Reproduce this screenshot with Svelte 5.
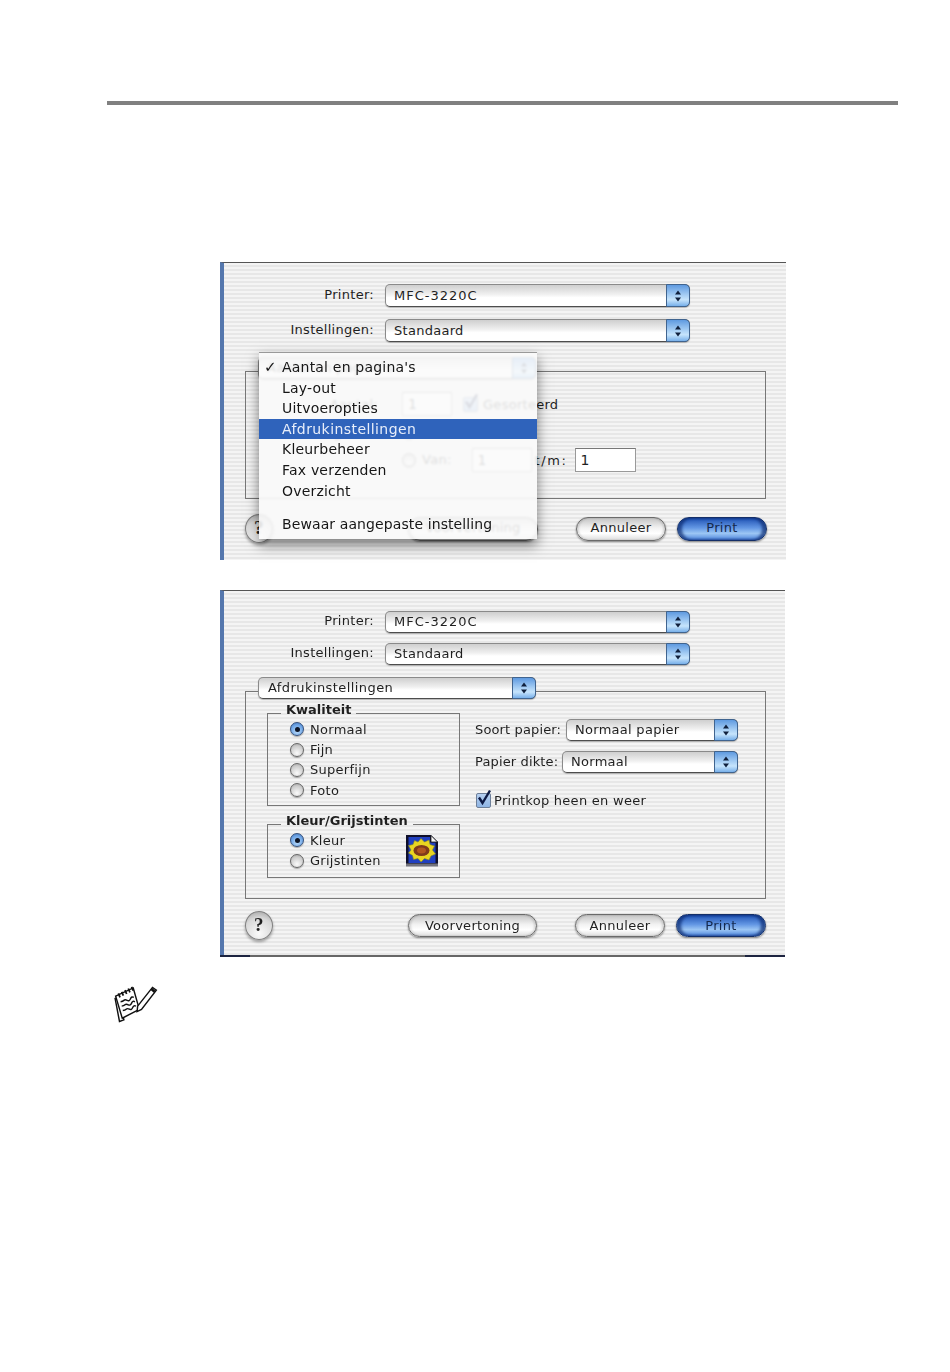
<script>
  const quality = ['Normaal', 'Fijn', 'Superfijn', 'Foto']
  const colour = ['Kleur', 'Grijstinten']
  const menu = [
    "Aantal en pagina's",
    'Lay-out',
    'Uitvoeropties',
    'Afdrukinstellingen',
    'Kleurbeheer',
    'Fax verzenden',
    'Overzicht',
  ]
</script>

{#snippet arrows()}
  <span class="stepper">
    <svg width="8" height="12" viewBox="0 0 8 12">
      <path d="M4 0.5 7 4.5H1ZM4 11.5 1 7.5H7Z" fill="#10203c" />
    </svg>
  </span>
{/snippet}

{#snippet popup(text, cls)}
  <div class="popup {cls}">
    <span class="popup-text">{text}</span>
    {@render arrows()}
  </div>
{/snippet}

{#snippet radio(label, on)}
  <div class="choice">
    <span class="radio" class:on></span>
    <span>{label}</span>
  </div>
{/snippet}

{#snippet tick()}
  <svg width="18" height="18" viewBox="0 0 18 18">
    <path d="M4 8.5 7.5 14 15 1.5" fill="none" stroke="#0d1a44" stroke-width="2.4" />
  </svg>
{/snippet}

{#snippet footer()}
  <div class="footer">
    <span class="help">?</span>
    <span class="pill preview">Voorvertoning</span>
    <span class="pill cancel">Annuleer</span>
    <span class="pill print">Print</span>
  </div>
{/snippet}

{#snippet header()}
  <div class="row">
    <span class="row-label">Printer:</span>
    {@render popup('MFC-3220C', 'wide model')}
  </div>
  <div class="row">
    <span class="row-label">Instellingen:</span>
    {@render popup('Standaard', 'wide')}
  </div>
{/snippet}

<main class="page">
  <div class="rule"></div>

  <section class="dialog first">
    {@render header()}

    <div class="box copies">
      {@render popup('Aantal en pagina\'s', 'pane')}
      <div class="copy-row">
        <span class="copy-label">Aantal:</span>
        <span class="field small">1</span>
        <span class="check on">{@render tick()}</span>
        <span class="sorted">Gesorteerd</span>
      </div>
      <div class="page-row">
        <span class="copy-label">Pagina's:</span>
        {@render radio('Alle', true)}
      </div>
      <div class="range-row">
        {@render radio('Van:', false)}
        <span class="field small range-from">1</span>
        <span class="until">t/m:</span>
        <span class="field">1</span>
      </div>
    </div>

    {@render footer()}

    <div class="menu">
      {#each menu as item, i}
        <div class="menu-item" class:active={item === 'Afdrukinstellingen'}>
          {#if i === 0}<span class="tick">✓</span>{/if}
          {item}
        </div>
      {/each}
      <div class="menu-item save">Bewaar aangepaste instelling</div>
    </div>
  </section>

  <section class="dialog second">
    {@render header()}

    <div class="box settings">
      {@render popup('Afdrukinstellingen', 'pane')}
      <div class="left">
        <fieldset class="group quality">
          <legend>Kwaliteit</legend>
          {#each quality as q, i}
            {@render radio(q, i === 0)}
          {/each}
        </fieldset>
        <fieldset class="group colour">
          <legend>Kleur/Grijstinten</legend>
          {#each colour as c, i}
            {@render radio(c, i === 0)}
          {/each}
          <svg class="flower" width="34" height="33" viewBox="0 0 34 33">
            <path d="M1 1H26L33 8V32H1Z" fill="#10102a" />
            <path d="M3.5 3H25V8.5H30.5V29H3.5Z" fill="#2140c0" />
            <path d="M26 1.5 32.5 8H26Z" fill="#f6f6f6" stroke="#222" stroke-width=".8" />
            <path d="M16 4.5 19.5 8 24 6 25 10.5 29.5 12 27.5 16 30.5 20 26 22 24 26 19.5 24.5 16 28 13 24.5 8.5 25.5 7.5 21.5 3.5 19 6 16 3.5 11.5 8 10.5 9.5 6.5 13 8Z" fill="#e9d521" stroke="#7d8426" stroke-width=".6" />
            <ellipse cx="16.5" cy="16.5" rx="8" ry="5.6" fill="#7f3a1b" />
            <ellipse cx="16.5" cy="16.5" rx="4.5" ry="3" fill="#b1561f" />
            <path d="M1 29.5H33V32.5H1Z" fill="#72727c" />
          </svg>
        </fieldset>
      </div>
      <div class="right">
        <div class="paper-row">
          <span class="paper-label">Soort papier:</span>
          {@render popup('Normaal papier', 'paper')}
        </div>
        <div class="paper-row">
          <span class="paper-label">Papier dikte:</span>
          {@render popup('Normaal', 'thick')}
        </div>
        <div class="bidi">
          <span class="check on">{@render tick()}</span>
          <span>Printkop heen en weer</span>
        </div>
      </div>
    </div>

    {@render footer()}
  </section>

  <svg class="note" width="44" height="44" viewBox="16 11 40 40">
    <g fill="#fff" stroke="#111" stroke-width="1.3">
      <path d="M17 25 21 46 25 44.5 20 24Z" />
      <path d="M17.5 23 33.5 15.5 39 35 23.5 43Z" />
      <path d="M37.5 32 51 15 54.5 17.5 41 35 37 37Z" />
    </g>
    <path d="M20 20.5 21.5 24M23 19 24.5 22.5M26 17.5 27.5 21M29 16 30.5 19.5M32 14.5 33.5 18" stroke="#111" stroke-width="1.6" />
    <path d="M22 28q2-.2 3-1.2t3 0 3-1.5 3-1.2M23 32q2-.2 3-1.2t3 0 3-1.5 3-1.2M24 36q2-.2 3-1.2t3 0 3-1.5 3-1.2" fill="none" stroke="#111" stroke-width="1.3" />
    <path d="M50 16.5 53 19" stroke="#111" stroke-width="2.4" />
  </svg>
</main>

<style>
  :global(body) {
    background: #fff;
  }

  .page {
    width: 950px;
    height: 1372px;
    padding-top: 101px;
    box-sizing: border-box;
    font-family: 'DejaVu Sans', sans-serif;
    font-size: 13px;
    letter-spacing: 0.28px;
    color: #1f1f1f;
    overflow: hidden;
  }

  .rule {
    width: 791px;
    height: 4px;
    margin-left: 107px;
    background: #808080;
  }

  .dialog {
    position: relative;
    box-sizing: border-box;
    margin-left: 220px;
    padding-top: 21px;
    border-left: 4px solid #5577ad;
    border-top: 1px solid #555;
    background: repeating-linear-gradient(#f4f4f4 0 2px, #e7e7e7 2px 4px);
    filter: blur(0.35px);
  }

  .first {
    width: 566px;
    height: 298px;
    margin-top: 157px;
  }

  .second {
    width: 565px;
    height: 367px;
    margin-top: 30px;
    padding-top: 20px;
    border-bottom: 2px solid #666;
  }

  .second::after {
    content: '';
    position: absolute;
    left: -4px;
    right: 0;
    bottom: -2px;
    height: 2px;
    background: linear-gradient(90deg, #1d2440 30px, transparent 30px, transparent 525px, #1d2440 525px);
  }

  .row {
    display: flex;
    align-items: center;
    gap: 11px;
    margin-bottom: 12px;
  }

  .second .row {
    margin-bottom: 10px;
  }

  .second .row .popup {
    height: 22px;
    line-height: 19px;
  }

  .first .row .popup {
    line-height: 22px;
  }

  .row-label {
    width: 150px;
    padding-bottom: 2px;
    text-align: right;
  }

  .second .row-label {
    padding-bottom: 4px;
  }

  .popup {
    display: flex;
    box-sizing: border-box;
    height: 23px;
    border: 1px solid #8a8a8a;
    border-bottom-color: #4d4d4d;
    border-radius: 5px;
    background: linear-gradient(#cfcfcf, #f0f0f0 45%, #fff 60%, #fff);
    box-shadow: 0 1px 1px rgba(0, 0, 0, 0.25);
    line-height: 21px;
  }

  .popup-text {
    flex: 1;
    padding-left: 8px;
  }

  .model .popup-text {
    letter-spacing: 1px;
  }

  .stepper {
    display: flex;
    align-items: center;
    justify-content: center;
    width: 22px;
    margin: -1px;
    border: 1px solid #40648f;
    border-radius: 0 5px 5px 0;
    background: linear-gradient(#5f9ae0, #a9d0f5 50%, #c6e4fc 70%, #78b0ea);
  }

  .wide {
    width: 305px;
  }

  .pane {
    position: absolute;
    left: 12px;
    top: -15px;
    width: 278px;
    height: 22px;
    line-height: 19px;
  }

  .settings .pane .popup-text {
    padding-left: 9px;
    letter-spacing: 0.42px;
  }

  .box {
    position: relative;
    box-sizing: border-box;
    width: 521px;
    margin-left: 21px;
    border: 1px solid #777;
  }

  .copies {
    height: 128px;
    margin-top: 29px;
    padding-top: 20px;
  }

  .copy-row,
  .page-row,
  .range-row {
    display: flex;
    align-items: center;
  }

  .copy-row {
    height: 24px;
  }

  .copy-label {
    width: 132px;
    text-align: right;
    margin-right: 24px;
  }

  .field {
    box-sizing: border-box;
    width: 61px;
    height: 24px;
    padding-left: 5px;
    border: 1px solid #999;
    border-top-color: #777;
    background: #fff;
    font-size: 14px;
    line-height: 22px;
  }

  .small {
    width: 50px;
  }

  .sorted {
    margin-left: 5px;
  }

  .page-row {
    height: 32px;
  }

  .range-row {
    height: 24px;
    padding-left: 156px;
  }

  .range-from {
    width: 60px;
    margin-left: 20px;
  }

  .until {
    margin: 0 7px 0 3px;
    letter-spacing: 1.6px;
  }

  .check {
    position: relative;
    box-sizing: border-box;
    width: 15px;
    height: 15px;
    margin-left: 11px;
    border: 1px solid #6d7f99;
    border-radius: 2px;
    background: linear-gradient(#b5cff0, #8fb5e4);
  }

  .check svg {
    position: absolute;
    left: -2px;
    top: -5px;
  }

  .choice {
    display: flex;
    align-items: center;
    gap: 6px;
    height: 20.4px;
    white-space: nowrap;
  }

  .radio {
    box-sizing: border-box;
    position: relative;
    width: 14px;
    height: 14px;
    flex: none;
    border: 1px solid #666;
    border-radius: 50%;
    background: radial-gradient(circle at 50% 75%, #fafafa, #cfcfcf 60%, #a0a0a0);
    box-shadow: 0 1px 1px rgba(0, 0, 0, 0.3);
  }

  .radio.on {
    border-color: #34507c;
    background: radial-gradient(circle at 50% 70%, #b9dafa, #6fa6e6 60%, #3f72bb);
  }

  .radio.on::after {
    content: '';
    position: absolute;
    left: 3.5px;
    top: 3.5px;
    width: 5px;
    height: 5px;
    border-radius: 50%;
    background: #0c1426;
  }

  .footer {
    display: flex;
    align-items: center;
    box-sizing: border-box;
    width: 543px;
    height: 29px;
    margin-top: 15px;
    padding-left: 21px;
  }

  .second .footer {
    margin-top: 12px;
  }

  .help {
    box-sizing: border-box;
    width: 28px;
    height: 29px;
    border: 1px solid #808080;
    border-radius: 50%;
    background: radial-gradient(circle at 50% 80%, #fafafa, #d8d8d8 62%, #9a9a9a);
    box-shadow: 0 2px 3px rgba(0, 0, 0, 0.35);
    font: bold 19px/26px 'Liberation Serif', serif;
    text-align: center;
  }

  .pill {
    box-sizing: border-box;
    width: 90px;
    height: 24px;
    margin-left: 11px;
    border: 1px solid #6a6a6a;
    border-radius: 12px;
    background: linear-gradient(#c4c4c4, #f2f2f2 45%, #fff 70%, #dedede);
    box-shadow: 0 1px 2px rgba(0, 0, 0, 0.45), inset 2px 0 2px rgba(0, 0, 0, 0.12), inset -2px 0 2px rgba(0, 0, 0, 0.12);
    text-align: center;
    line-height: 20px;
  }

  .second .pill {
    height: 23px;
    line-height: 21px;
  }

  .preview {
    width: 130px;
    margin-left: 135px;
  }

  .second .preview {
    width: 129px;
  }

  .cancel {
    margin-left: 38px;
  }

  .print {
    border: 1px solid #142f68;
    background: linear-gradient(#1f52b4, #6397e4 45%, #9cc6f4 70%, #4d84dc);
    box-shadow: 0 1px 2px rgba(0, 0, 0, 0.45), inset 4px 0 3px rgba(10, 40, 110, 0.7), inset -4px 0 3px rgba(10, 40, 110, 0.7);
    color: #15294d;
  }

  .menu {
    position: absolute;
    left: 35px;
    top: 89px;
    box-sizing: border-box;
    width: 278px;
    height: 187px;
    padding-top: 4px;
    border-top: 1px solid #999;
    background: rgba(250, 250, 250, 0.87);
    backdrop-filter: blur(0.8px);
    box-shadow: 0 6px 12px rgba(0, 0, 0, 0.5);
    font-size: 14px;
    letter-spacing: 0.2px;
    color: #161616;
  }

  .menu-item {
    position: relative;
    height: 20.6px;
    padding-left: 23px;
    line-height: 20px;
    white-space: nowrap;
  }

  .menu-item.active {
    background: #2f63bb;
    color: #e8eefa;
    letter-spacing: 0.42px;
  }

  .menu-item.save {
    margin-top: 13px;
    letter-spacing: 0.1px;
  }

  .tick {
    position: absolute;
    left: 5px;
    font-size: 15px;
    font-weight: bold;
  }

  .settings {
    display: flex;
    height: 208px;
    margin-top: 26px;
    padding-left: 21px;
  }

  .left {
    width: 193px;
  }

  .group {
    position: relative;
    box-sizing: border-box;
    width: 193px;
    margin: 0;
    padding: 0 0 0 22px;
    border: 1px solid #777;
  }

  .group legend {
    margin-left: -9px;
    padding: 0 5px 8px;
    font-weight: bold;
    line-height: 15px;
    letter-spacing: 0;
  }

  .quality {
    height: 104px;
    margin-top: 10px;
  }

  .quality :global(.choice:first-of-type),
  .colour :global(.choice:first-of-type) {
    margin-top: -6px;
  }

  .colour {
    height: 65px;
    margin-top: 7px;
  }

  .flower {
    position: absolute;
    left: 137px;
    top: -2px;
  }

  .right {
    width: 263px;
    margin-left: 15px;
    padding-top: 27px;
  }

  .paper-row {
    display: flex;
    align-items: center;
    justify-content: space-between;
    margin-bottom: 10px;
  }

  .paper-label {
    padding-bottom: 1px;
    letter-spacing: 0.14px;
  }

  .paper-row .popup {
    height: 22px;
    line-height: 19px;
  }

  .paper {
    width: 172px;
  }

  .thick {
    width: 176px;
  }

  .bidi {
    display: flex;
    align-items: center;
    gap: 3px;
    margin-top: 20px;
  }

  .bidi .check {
    margin-left: 1px;
  }

  .note {
    display: block;
    margin: 26px 0 0 114px;
  }
</style>
